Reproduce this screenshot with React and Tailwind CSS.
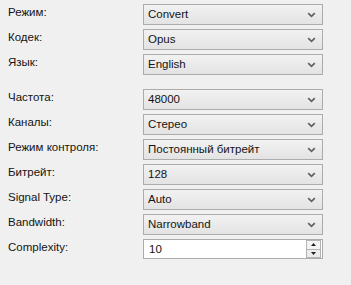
import React from 'react';

const groups = [
    [
        { label: 'Режим:', value: 'Convert' },
        { label: 'Кодек:', value: 'Opus' },
        { label: 'Язык:', value: 'English' },
    ],
    [
        { label: 'Частота:', value: '48000' },
        { label: 'Каналы:', value: 'Стерео' },
        { label: 'Режим контроля:', value: 'Постоянный битрейт' },
        { label: 'Битрейт:', value: '128' },
        { label: 'Signal Type:', value: 'Auto' },
        { label: 'Bandwidth:', value: 'Narrowband' },
    ],
];

const Chevron = () => (
    <svg width="9" height="6" viewBox="0 0 9 6" className="shrink-0">
        <path d="M1.2 1.2 L4.5 4.3 L7.8 1.2" fill="none" stroke="#606060" strokeWidth="1.7" />
    </svg>
);

const Select = ({ value }) => (
    <div className="flex h-[21px] w-[180px] items-center justify-between border border-[#acacac] bg-gradient-to-b from-[#f2f2f2] to-[#e3e3e3] pl-[4px] pr-[6px]">
        <span>{value}</span>
        <Chevron />
    </div>
);

const Row = ({ label, children }) => (
    <div className="flex h-[25px] items-start">
        <div className="w-[143px] pl-[8px] pt-[1px]">{label}</div>
        {children}
    </div>
);

const App = () => {
    return (
        <div className="h-[285px] w-[351px] bg-[#f0f0f0] pt-[4px] font-['Liberation_Sans',sans-serif] text-[11.5px] leading-[15px] text-[#141414]">
            {groups.map((group, gi) => (
                <div key={gi} className={gi > 0 ? 'mt-[10px]' : ''}>
                    {group.map(item => (
                        <Row key={item.label} label={item.label}>
                            <Select value={item.value} />
                        </Row>
                    ))}
                    {gi === 1 && (
                        <Row label="Complexity:">
                            <div className="flex h-[20px] w-[180px] items-center border border-[#acacac] bg-white">
                                <span className="flex-1 pl-[5px]">10</span>
                                <div className="mr-[1px] flex h-[18px] w-[15px] flex-col border border-[#b4b4b4]">
                                    <div className="flex flex-1 items-center justify-center border-b border-[#b4b4b4] bg-[#f4f4f4]">
                                        <svg width="5" height="3" viewBox="0 0 5 3"><path d="M0 3 L2.5 0 L5 3 Z" fill="#222" /></svg>
                                    </div>
                                    <div className="flex flex-1 items-center justify-center bg-[#ececec]">
                                        <svg width="5" height="3" viewBox="0 0 5 3"><path d="M0 0 L2.5 3 L5 0 Z" fill="#222" /></svg>
                                    </div>
                                </div>
                            </div>
                        </Row>
                    )}
                </div>
            ))}
        </div>
    );
};

export default App;
